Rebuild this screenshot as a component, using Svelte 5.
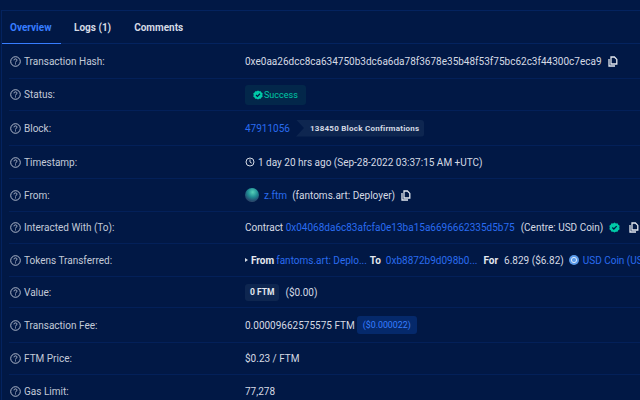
<script lang="ts">
  const labels: Record<string, string> = {
    hash: "Transaction Hash:",
    status: "Status:",
    block: "Block:",
    time: "Timestamp:",
    from: "From:",
    to: "Interacted With (To):",
    tokens: "Tokens Transferred:",
    value: "Value:",
    fee: "Transaction Fee:",
    price: "FTM Price:",
    gas: "Gas Limit:",
  };
  const heights: Record<string, number> = {
    hash: 35, status: 32, block: 35, time: 33, from: 33, to: 32, tokens: 33, value: 31, fee: 35, price: 32, gas: 34,
  };
</script>

{#snippet copy()}
  <svg class="copy" width="10" height="11" viewBox="0 0 10 11" fill="none" stroke="currentColor" stroke-width="1.3">
    <path d="M1 3v7h6" />
    <path d="M3 1h3.4L8.8 3.4V8H3z" fill="#011845" />
  </svg>
{/snippet}

{#snippet check(size)}
  <svg width={size} height={size} viewBox="0 0 12 12">
    <path d="M6 .5l1.5 1 1.8-.1.8 1.6 1.5 1-.4 2 .4 2-1.5 1-.8 1.6-1.8-.1-1.5 1-1.5-1-1.8.1-.8-1.6-1.5-1 .4-2-.4-2 1.5-1 .8-1.6 1.8.1z" fill="#00c9a7" />
    <path d="M3.6 6l1.7 1.7 3.1-3.2" fill="none" stroke="#011845" stroke-width="1.4" />
  </svg>
{/snippet}

<div class="page">
  <div class="card">
    <nav class="tabs">
      <span class="tab active">Overview</span>
      <span class="tab">Logs (1)</span>
      <span class="tab">Comments</span>
    </nav>

    <div class="rows">
      {#each Object.keys(labels) as key}
        <div class="row" style="height: {heights[key]}px">
          <div class="label">
            <svg class="help" width="11" height="11" viewBox="0 0 11 11" fill="none" stroke="#c3cad8" stroke-width="0.9">
              <circle cx="5.5" cy="5.5" r="4.8" />
              <path d="M4 4.3c0-.9.7-1.4 1.5-1.4S7 3.4 7 4.1c0 1.1-1.5 1.2-1.5 2.4" />
              <path d="M5.5 7.4v1" />
            </svg>
            {labels[key]}
          </div>
          <div class="value">
            {#if key === "hash"}
              <span>0xe0aa26dcc8ca634750b3dc6a6da78f3678e35b48f53f75bc62c3f44300c7eca9</span>
              {@render copy()}
            {:else if key === "status"}
              <span class="badge-success">{@render check(10)} Success</span>
            {:else if key === "block"}
              <a href="#b">47911056</a>
              <span class="confirm">138450 Block Confirmations</span>
            {:else if key === "time"}
              <svg width="10" height="10" viewBox="0 0 10 10" fill="none" stroke="#d5dae4" stroke-width="1">
                <circle cx="5" cy="5" r="4" />
                <path d="M5 2.4V5l1.8 1.2" />
              </svg>
              <span class="time">1 day 20 hrs ago (Sep-28-2022 03:37:15 AM +UTC)</span>
            {:else if key === "from"}
              <span class="globe"></span>
              <a href="#f">z.ftm</a>
              <span class="tag">(fantoms.art: Deployer)</span>
              {@render copy()}
            {:else if key === "to"}
              <span>Contract <a href="#c">0x04068da6c83afcfa0e13ba15a6696662335d5b75</a></span>
              <span class="centre">(Centre: USD Coin)</span>
              <span class="verified">{@render check(11)}</span>
              {@render copy()}
            {:else if key === "tokens"}
              <span class="caret"></span>
              <b>From</b>
              <a class="from-link" href="#x">fantoms.art: Deplo...</a>
              <b class="to">To</b>
              <a class="gap" href="#y">0xb8872b9d098b0...</a>
              <b class="for">For</b>
              <span class="amount">6.829 ($6.82)</span>
              <svg class="coin" width="10" height="10" viewBox="0 0 10 10">
                <circle cx="5" cy="5" r="5" fill="#5b9bea" />
                <circle cx="5" cy="5" r="2.6" fill="none" stroke="#dbe9fb" stroke-width="1" />
              </svg>
              <a href="#u">USD Coin (USDC)</a>
            {:else if key === "value"}
              <span class="zero">0 FTM</span>
              <span class="usd">($0.00)</span>
            {:else if key === "fee"}
              <span>0.00009662575575 FTM</span>
              <span class="fee-usd">($0.000022)</span>
            {:else if key === "price"}
              <span>$0.23 / FTM</span>
            {:else}
              <span>77,278</span>
            {/if}
          </div>
        </div>
      {/each}
    </div>
  </div>
</div>

<style>
  :global(body) {
    margin: 0;
    background: #011845;
  }

  .page {
    width: 640px;
    height: 400px;
    overflow: hidden;
    padding-top: 10px;
    box-sizing: border-box;
    font-family: Roboto, "Liberation Sans", sans-serif;
    font-size: 10px;
    color: #d5dae4;
  }

  .card {
    width: 660px;
    margin-left: 1px;
    background: #011845;
    border-top: 1px solid #04235f;
    border-left: 1px solid #04235f;
  }

  .tabs {
    display: flex;
    height: 32px;
    border-bottom: 1px solid #04235f;
  }

  .tab {
    display: flex;
    align-items: center;
    padding: 0 8px;
    margin-right: 7px;
    font-size: 10px;
    font-weight: 700;
    color: #d5dae4;
    box-sizing: border-box;
    height: 33px;
  }
  .tab:first-child {
    width: 59px;
    margin-right: 5px;
  }
  .active {
    color: #377dff;
    border-bottom: 1px solid #377dff;
  }

  .row {
    display: flex;
    align-items: center;
    margin-left: 7px;
    box-sizing: border-box;
    border-bottom: 1px solid #032059;
  }

  .label {
    display: flex;
    align-items: center;
    gap: 3px;
    width: 235px;
    margin-left: 1px;
    flex-shrink: 0;
    color: #c3cad8;
  }

  .value {
    display: flex;
    align-items: center;
    white-space: nowrap;
    gap: 4px;
  }

  a {
    color: #2a6cf0;
    text-decoration: none;
  }

  b {
    font-weight: 700;
    color: #e4e8ef;
  }

  .copy {
    color: #e4e8ef;
    margin-left: 2px;
  }

  .badge-success {
    display: flex;
    align-items: center;
    gap: 1px;
    height: 20px;
    padding: 0 8px;
    border-radius: 3px;
    font-size: 9px;
    color: #00c9a7;
    background: #03274a;
  }

  .confirm {
    display: flex;
    align-items: center;
    height: 17px;
    margin-left: 2px;
    padding: 0 5px 0 14px;
    font-size: 8px;
    font-weight: 700;
    letter-spacing: 0.25px;
    color: #d5dae4;
    background: #0e2650;
    border-radius: 0 3px 3px 0;
    clip-path: polygon(0 0, 100% 0, 100% 100%, 0 100%, 8px 50%);
  }

  .time {
    margin-left: -1px;
  }

  .globe {
    width: 14px;
    height: 14px;
    border-radius: 50%;
    background: radial-gradient(circle at 55% 30%, #55d0b8 0, #1f8a92 40%, #25496e 70%, #4a5568 100%);
    margin-right: 1px;
  }

  .tag {
    margin-left: 1px;
  }

  .centre {
    margin-left: 2px;
  }

  .verified {
    display: flex;
    margin-left: 2px;
    margin-right: 3px;
  }

  .caret {
    width: 0;
    height: 0;
    border-left: 3px solid #d5dae4;
    border-top: 2.5px solid transparent;
    border-bottom: 2.5px solid transparent;
    margin-right: -1px;
  }

  .from-link {
    margin-left: -2px;
  }

  .to {
    margin-left: -1px;
  }

  .gap {
    margin-left: 1px;
  }

  .for {
    margin-left: 2px;
  }

  .amount {
    margin-left: 2px;
  }

  .coin {
    margin-left: 1px;
  }

  .zero {
    display: flex;
    align-items: center;
    height: 17px;
    padding: 0 5px;
    border-radius: 3px;
    font-size: 8.5px;
    font-weight: 700;
    color: #e4e8ef;
    background: #0e2650;
  }

  .usd {
    margin-left: 2px;
  }

  .fee-usd {
    display: flex;
    align-items: center;
    height: 18px;
    padding: 0 6px;
    margin-left: -2px;
    border-radius: 3px;
    font-size: 8.8px;
    color: #377dff;
    background: #05296b;
  }
</style>
